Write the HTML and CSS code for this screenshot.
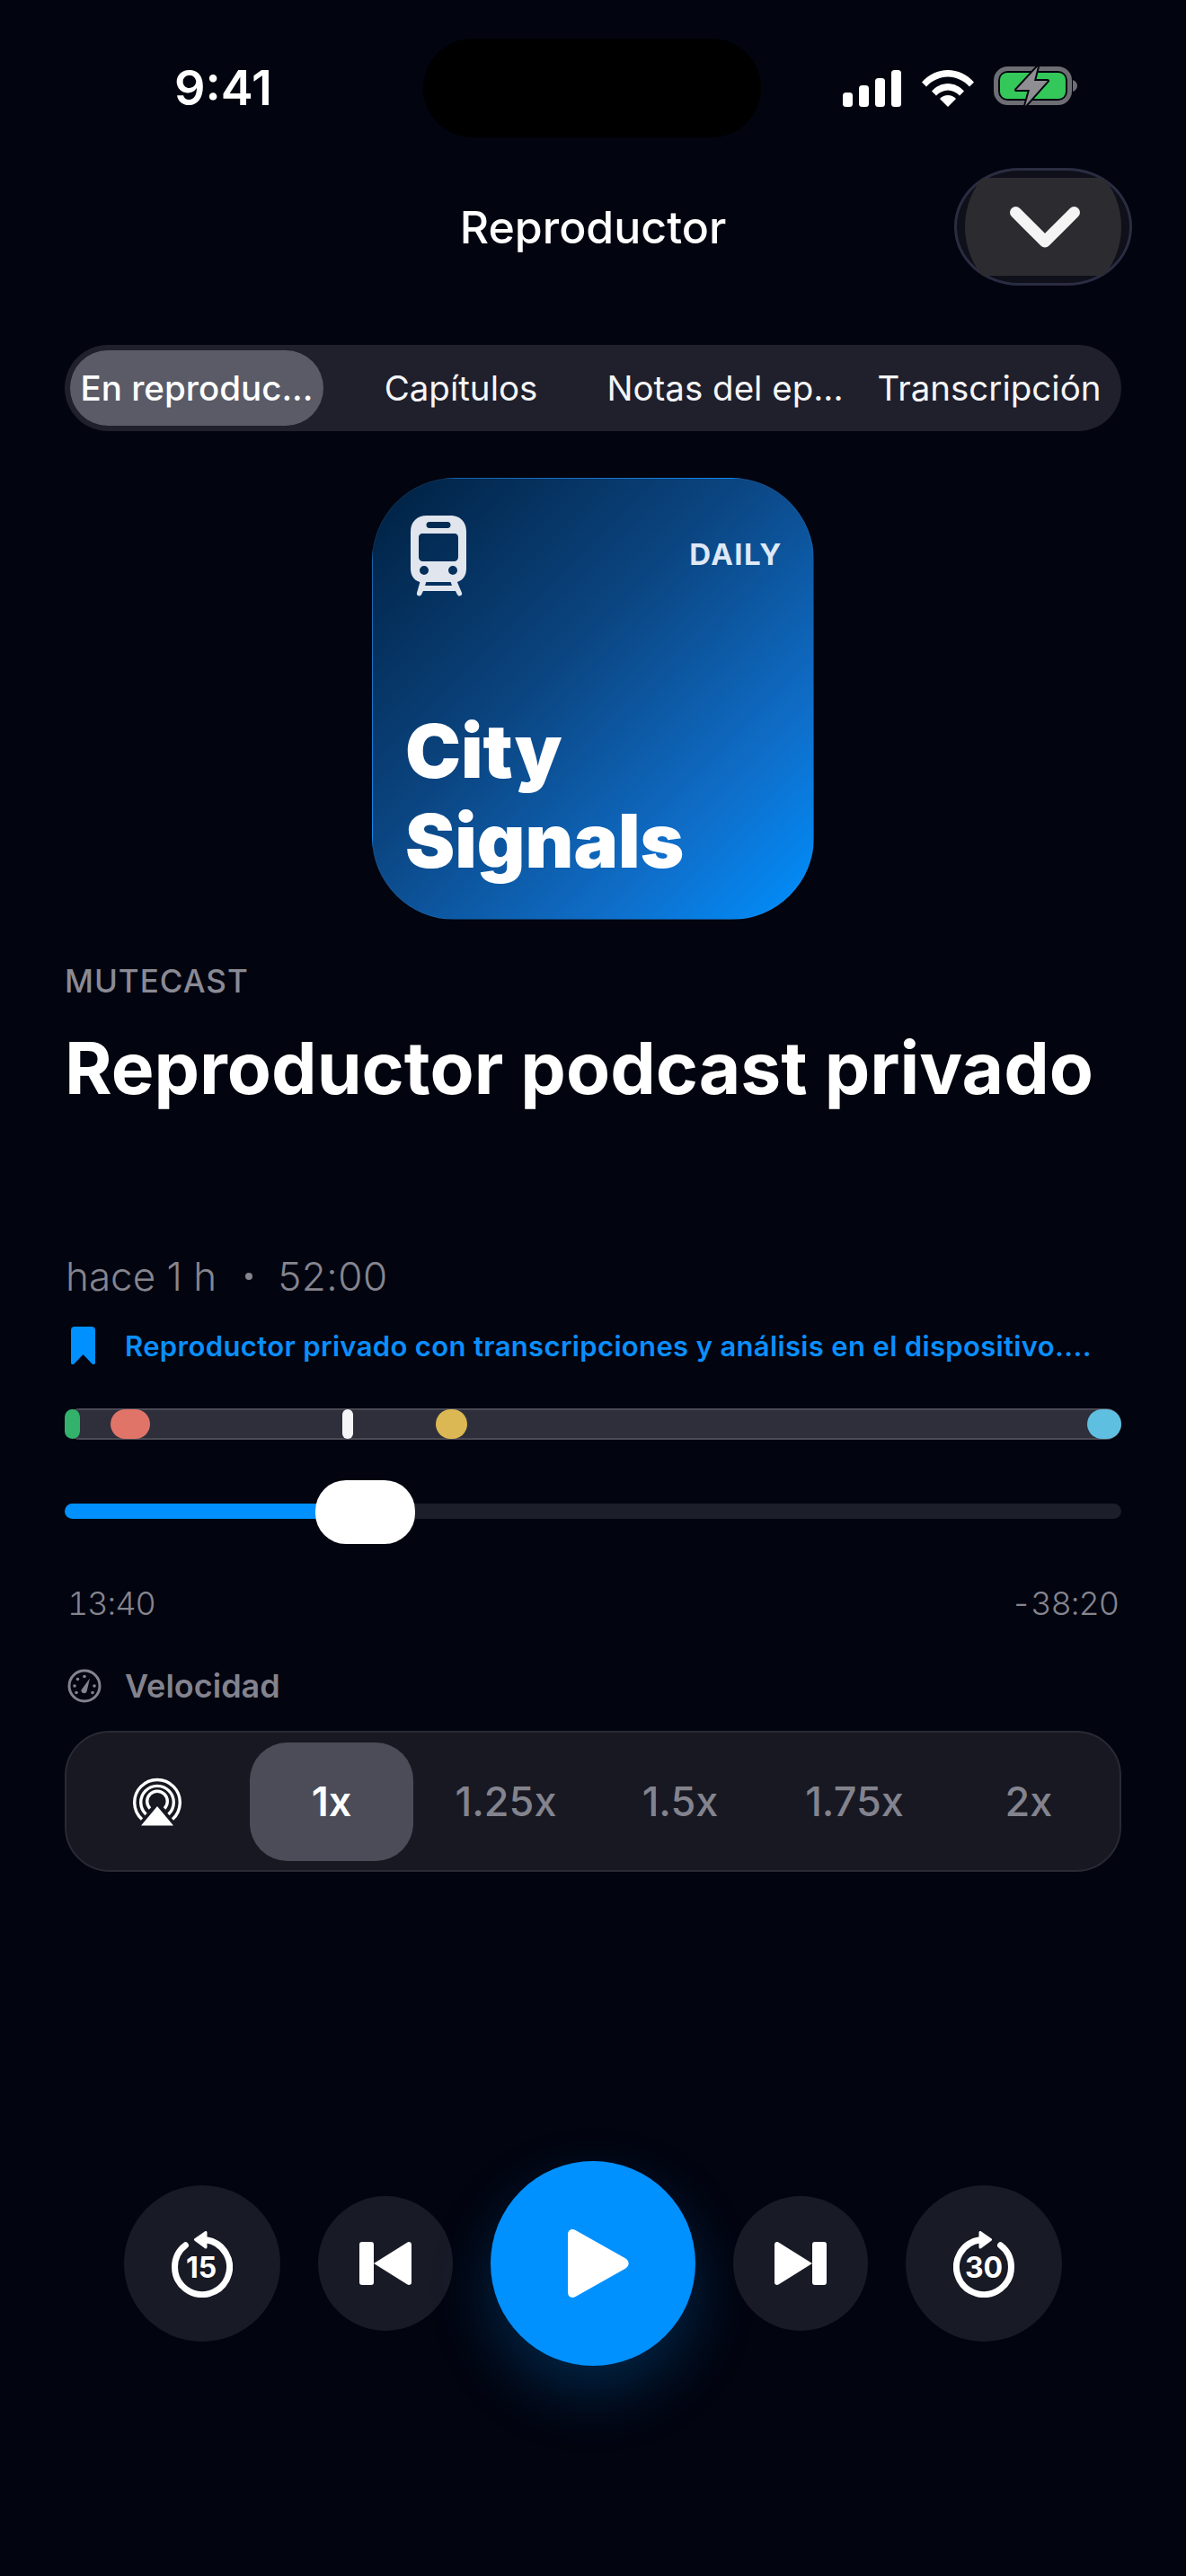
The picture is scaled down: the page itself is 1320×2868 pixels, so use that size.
FILE: index.html
```html
<!DOCTYPE html>
<html lang="es">
<head>
<meta charset="utf-8">
<title>Reproductor</title>
<link rel="stylesheet" href="styles.css">
</head>
<body>
<main class="screen">
  <header class="status">
    <span class="clock">9:41</span>
    <span class="island"></span>
    <div class="status-icons">
      <svg class="ic-signal" viewBox="0 0 65 41"><rect x="0" y="25" width="11" height="16" rx="3.5"/><rect x="18" y="17" width="11" height="24" rx="3.5"/><rect x="36" y="9" width="11" height="32" rx="3.5"/><rect x="54" y="0" width="11" height="41" rx="3.5"/></svg>
      <svg class="ic-wifi" viewBox="0 0 58 42"><path d="M0 14.500C7.500 6 18 1 29 1s21.500 5 29 13.500l-5 5C46.500 12.500 38 8.500 29 8.500S11.500 12.500 5 19.500z"/><path d="M11 24.500C15.500 19.500 22 16 29 16s13.500 3.500 18 8.500l-5 5C38.500 26 34 23.500 29 23.500S19.500 26 16 29.500z"/><path d="M20 33C22.500 30.500 25.500 29 29 29s6.500 1.500 9 4L29 42z"/></svg>
      <svg class="ic-battery" viewBox="0 0 93 46"><rect x="2.500" y="3.500" width="82" height="38" rx="13" fill="none" stroke="#6d6d74" stroke-width="5"/><path d="M88 16c3 1 5 3.500 5 6.500s-2 5.500-5 6.500z" fill="#6d6d74"/><rect x="7" y="8" width="73" height="29" rx="8" fill="#34c759"/><path d="M49 1 25 27h15l-5 18 25-28H45z" fill="#8e8e93" stroke="#05060f" stroke-width="4" stroke-linejoin="round" paint-order="stroke"/></svg>
    </div>
  </header>

  <div class="titlebar">
    <h1 class="bar-title">Reproductor</h1>
    <button class="close" aria-label="Cerrar">
      <span class="close-fill"></span>
      <svg class="ic-chevron" viewBox="0 0 78 46"><path d="M6.500 6.500 39 39 71.500 6.500" fill="none" stroke="#f4f4f4" stroke-width="13" stroke-linecap="round" stroke-linejoin="round"/></svg>
    </button>
  </div>

  <nav class="tabs">
    <span class="tab tab-on">En reproduc...</span>
    <span class="tab">Capítulos</span>
    <span class="tab">Notas del ep...</span>
    <span class="tab">Transcripción</span>
  </nav>

  <section class="art">
    <div class="art-top">
      <svg class="ic-train" viewBox="0 0 62 90"><path fill-rule="evenodd" d="M18 0h26c11 0 18 7 18 18v41c0 8-4 13-10 15H10C4 72 0 67 0 59V18C0 7 7 0 18 0zM21 7a3 3 0 0 0 0 7h20a3 3 0 0 0 0-7zM14 20c-4 0-5 2-5 5v21c0 3 2 5 5 5h34c3 0 5-2 5-5V25c0-3-1-5-5-5zM15 56a5 5 0 1 0 0 10 5 5 0 0 0 0-10zM47 56a5 5 0 1 0 0 10 5 5 0 0 0 0-10z"/><path d="M11 72h7l-2 6h30l-2-6h7l6 14c1 3-3 5-5 2l-2-4H14l-2 4c-2 3-6 1-5-2z"/></svg>
      <span class="art-tag">DAILY</span>
    </div>
    <p class="art-name">City<br>Signals</p>
  </section>

  <p class="kicker">MUTECAST</p>
  <h2 class="ep-title">Reproductor podcast privado</h2>
  <p class="meta"><span>hace 1 h</span><span class="dot"></span><span class="dur">52:00</span></p>

  <p class="bookmark">
    <svg class="ic-bookmark" viewBox="0 0 27 42"><path d="M4 0h19c2.500 0 4 1.500 4 4v36c0 2-2 3-3.500 1.500L13.500 31l-10 10.500C2 43 0 42 0 40V4c0-2.500 1.500-4 4-4z"/></svg>
    <span>Reproductor privado con transcripciones y análisis en el dispositivo....</span>
  </p>

  <div class="chapters">
    <span class="mark mark-green"></span>
    <span class="mark mark-red"></span>
    <span class="mark mark-white"></span>
    <span class="mark mark-yellow"></span>
    <span class="mark mark-blue"></span>
  </div>

  <div class="slider">
    <span class="slider-fill"></span>
    <span class="slider-thumb"></span>
  </div>

  <div class="times"><span>13:40</span><span>-38:20</span></div>

  <div class="speed-label">
    <svg class="ic-gauge" viewBox="0 0 38 38"><circle cx="19" cy="19" r="17" fill="none" stroke="#83838e" stroke-width="3"/><path d="M15.500 23.500 25 10.500 21.500 25.500a3.200 3.200 0 0 1-6-2z" fill="#83838e"/><g fill="#83838e"><circle cx="19" cy="8.500" r="1.800"/><circle cx="11.500" cy="11.500" r="1.800"/><circle cx="8" cy="19" r="1.800"/><circle cx="10" cy="26.500" r="1.800"/><circle cx="28" cy="26.500" r="1.800"/><circle cx="30" cy="19" r="1.800"/></g></svg>
    <span>Velocidad</span>
  </div>

  <div class="speeds">
    <span class="speed">
      <svg class="ic-airplay" viewBox="0 0 54 54" fill="none" stroke="#fff" stroke-width="3.400"><path d="M10 46.500A25.300 25.300 0 1 1 44 46.500"/><path d="M14.500 41A18.300 18.300 0 1 1 39.500 41"/><path d="M19 34.500A11.300 11.300 0 1 1 35 34.500"/><path d="M27 32 45 53.500H9z" fill="#fff" stroke="none"/></svg>
    </span>
    <span class="speed speed-on">1x</span>
    <span class="speed">1.25x</span>
    <span class="speed">1.5x</span>
    <span class="speed">1.75x</span>
    <span class="speed">2x</span>
  </div>

  <div class="controls">
    <button class="ctl ctl-lg" aria-label="Atrás 15">
      <svg class="ic-skip" viewBox="0 0 68 74">
        <path d="M38 9.800A30.500 30.500 0 1 1 15.500 15.800" fill="none" stroke="#fff" stroke-width="7" stroke-linecap="round"/>
        <path d="M26.500 9.500 38 1.500V18z" fill="#fff" stroke="#fff" stroke-width="3" stroke-linejoin="round"/>
        <text x="33" y="52" class="skip-num">15</text>
      </svg>
    </button>
    <button class="ctl ctl-md" aria-label="Anterior">
      <svg class="ic-step" viewBox="0 0 58 48"><rect width="16" height="48" rx="3"/><path d="M53.500.5C55.500-.5 58 .5 58 3v42c0 2.500-2.500 3.500-4.500 2.500L16 24z"/></svg>
    </button>
    <button class="ctl-play" aria-label="Reproducir">
      <svg class="ic-play" viewBox="0 0 68 76"><path d="M0 6C0 1 4-1.500 8.500 1l55 31c5.500 3 5.500 9 0 12l-55 31C4 77.500 0 75 0 70z"/></svg>
    </button>
    <button class="ctl ctl-md" aria-label="Siguiente">
      <svg class="ic-step" viewBox="0 0 58 48"><path d="M4.500.5C2.500-.5 0 .5 0 3v42c0 2.500 2.500 3.500 4.500 2.500L42 24z"/><rect x="42" width="16" height="48" rx="3"/></svg>
    </button>
    <button class="ctl ctl-lg" aria-label="Adelante 30">
      <svg class="ic-skip" viewBox="0 0 68 74">
        <g transform="matrix(-1 0 0 1 68 0)">
          <path d="M38 9.800A30.500 30.500 0 1 1 15.500 15.800" fill="none" stroke="#fff" stroke-width="7" stroke-linecap="round"/>
          <path d="M26.500 9.500 38 1.500V18z" fill="#fff" stroke="#fff" stroke-width="3" stroke-linejoin="round"/>
        </g>
        <text x="34" y="52" class="skip-num">30</text>
      </svg>
    </button>
  </div>
</main>
</body>
</html>
```
FILE: styles.css
```css
* { box-sizing: border-box; margin: 0; padding: 0; }
html, body { height: 100%; background: #02040f; }
body { font-family: Inter, "Liberation Sans", sans-serif; color: #fff; overflow: hidden; }
button { border: 0; background: none; color: inherit; font: inherit; }
svg { display: block; flex: none; }

.screen { width: 1320px; height: 2868px; padding: 0 72px; display: flex; flex-direction: column; }

.status { height: 111px; margin-top: 42px; margin-right: -50px; display: grid; grid-template-columns: 399px 376px 1fr; align-items: center; }
.clock { font-size: 54px; font-weight: 600; line-height: 1; padding-left: 122px; }
.island { height: 110px; background: #000; border-radius: 55px; }
.status-icons { display: flex; align-items: flex-end; padding-left: 91px; height: 43px; }
.ic-signal { width: 65px; height: 41px; fill: #fff; }
.ic-wifi { width: 58px; height: 42px; fill: #fff; margin-left: 23px; }
.ic-battery { width: 93px; height: 46px; margin-left: 22px; }

.titlebar { height: 131px; margin-top: 34px; display: flex; align-items: center; justify-content: flex-end; position: relative; margin-right: -12px; }
.bar-title { position: absolute; left: 0; right: 12px; top: 46px; text-align: center; font-size: 50px; font-weight: 500; line-height: 40px; }
.close { width: 198px; height: 131px; border-radius: 72px / 65px; border: 3px solid #2a2d42; background: #0f1019; display: flex; align-items: center; justify-content: center; position: relative; }
.close-fill { position: absolute; left: 9px; top: 8px; width: 174px; height: 109px; background: #2c2c30; clip-path: circle(87px at 50% 50%); }
.ic-chevron { position: relative; width: 78px; height: 46px; margin-left: 3px; }

.tabs { height: 96px; margin-top: 66px; background: #1f202c; border-radius: 48px; display: grid; grid-template-columns: repeat(4, 1fr); align-items: center; }
.tab { text-align: center; font-size: 38.500px; line-height: 84px; color: #f5f5f7; white-space: nowrap; }
.tab-on { background: #5a5b66; border-radius: 42px; margin: 0 6px; font-weight: 500; color: #fff; }

.art { width: 492px; height: 492px; margin: 52px auto 0; padding: 41px 34px 37px 36px; border-radius: 92px; border: 1px solid rgba(255,255,255,.05); background: linear-gradient(135deg, #002040 0%, #0b4581 42%, #0f6ec9 76%, #0090ff 100%); display: flex; flex-direction: column; justify-content: space-between; }
.art-top { display: flex; justify-content: space-between; align-items: flex-start; padding-left: 6px; }
.ic-train { width: 62px; height: 90px; fill: #e1e6ee; }
.art-tag { font-size: 33px; font-weight: 700; letter-spacing: 1.500px; color: #dfe8f5; margin-top: 23px; }
.art-name { font-size: 83px; font-weight: 900; line-height: 100px; }

.kicker { margin-top: 48px; font-size: 35px; font-weight: 500; letter-spacing: 1px; line-height: 40px; color: #8a8a94; }
.ep-title { margin-top: 27px; font-size: 80.250px; font-weight: 700; line-height: 100px; white-space: nowrap; }

.meta { margin-top: 156px; display: flex; align-items: center; font-size: 44px; font-weight: 300; line-height: 52px; color: #85858f; padding-left: 1px; }
.dot { width: 8px; height: 8px; border-radius: 50%; background: #85858f; margin: 0 28px 0 32px; }
.dur { letter-spacing: .5px; }

.bookmark { margin-top: 30px; display: flex; align-items: center; gap: 33px; padding-left: 7px; height: 42px; font-size: 31px; font-weight: 600; letter-spacing: .35px; color: #0a8fff; white-space: nowrap; }
.ic-bookmark { width: 27px; height: 42px; fill: #0091ff; }

.chapters { margin-top: 49px; height: 35px; position: relative; background: #2e2f3a; border-top: 2px solid #4a4a55; border-bottom: 2px solid #4a4a55; border-radius: 17px; }
.mark { position: absolute; top: -1px; bottom: -1px; border-radius: 17px; }
.mark-green { left: 0; width: 17px; background: #32b26b; }
.mark-red { left: 51px; width: 44px; background: #e07468; }
.mark-white { left: 309px; width: 12px; background: #f5f5f7; }
.mark-yellow { left: 413px; width: 35px; background: #dcb854; }
.mark-blue { right: 0; width: 38px; background: #5fbfe0; }

.slider { margin-top: 71px; height: 17px; background: #1c1e29; border-radius: 9px; position: relative; }
.slider-fill { position: absolute; left: 0; top: 0; bottom: 0; width: 290px; background: #0091ff; border-radius: 9px 0 0 9px; }
.slider-thumb { position: absolute; left: 279px; top: -26px; width: 111px; height: 71px; background: #fff; border-radius: 34px; }

.times { margin-top: 72px; display: flex; justify-content: space-between; font-size: 36px; font-weight: 300; font-variant-numeric: tabular-nums; letter-spacing: -1px; line-height: 44px; color: #85858f; padding: 0 3px; }

.speed-label { margin-top: 51px; display: flex; align-items: center; gap: 26px; padding-left: 3px; height: 38px; font-size: 36px; font-weight: 600; color: #83838e; }
.ic-gauge { width: 38px; height: 38px; }

.speeds { margin-top: 31px; height: 157px; background: #171822; border: 2px solid #292a35; border-radius: 50px; padding: 0 4px; display: grid; grid-template-columns: repeat(6, 1fr); align-items: center; }
.speed { display: flex; align-items: center; justify-content: center; height: 132px; font-size: 45px; font-weight: 500; color: #83838e; }
.speed-on { margin: 0 6px; background: #4b4c57; border-radius: 42px; color: #fff; font-weight: 600; }
.ic-airplay { width: 54px; height: 54px; }

.controls { margin-top: 322px; display: flex; align-items: center; justify-content: center; gap: 42px; }
.ctl { border-radius: 50%; background: #181a25; display: flex; align-items: center; justify-content: center; }
.ctl-lg { width: 174px; height: 174px; }
.ctl-md { width: 150px; height: 150px; }
.ctl-play { width: 228px; height: 228px; border-radius: 50%; background: #0091ff; box-shadow: 0 30px 70px rgba(0,145,255,.24); display: flex; align-items: center; justify-content: center; padding-left: 12px; }
.ic-skip { width: 68px; height: 74px; margin-top: 2px; }
.skip-num { font-family: Inter, sans-serif; font-size: 32px; font-weight: 700; fill: #fff; text-anchor: middle; }
.ic-step { width: 58px; height: 48px; fill: #fff; }
.ic-play { width: 68px; height: 76px; fill: #fff; }
```
